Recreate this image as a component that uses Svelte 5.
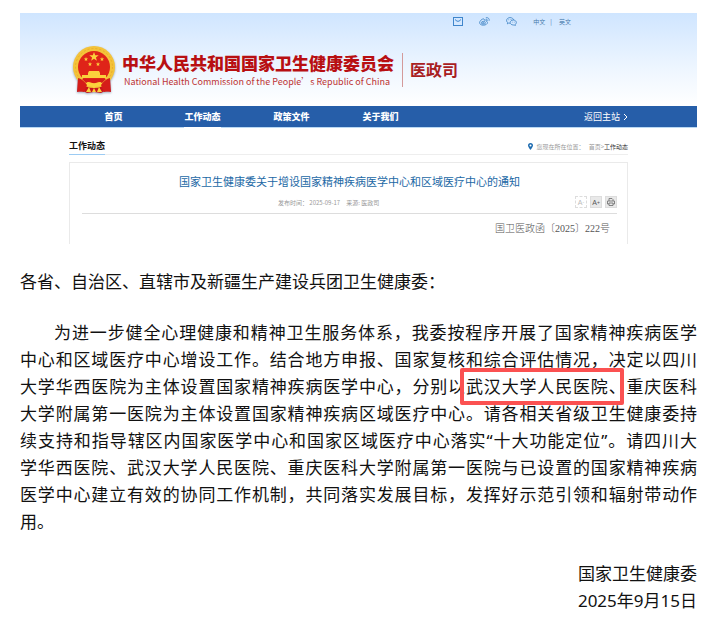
<script>
  const navItems = ['首页', '工作动态', '政策文件', '关于我们'];
  let current = '工作动态';

  // Рядки основного тексту; mark - виділена частина рядка
  const lines = [
    { text: '为进一步健全心理健康和精神卫生服务体系，我委按程序开展了国家精神疾病医学' },
    { text: '中心和区域医疗中心增设工作。结合地方申报、国家复核和综合评估情况，决定以四川' },
    { text: '大学华西医院为主体设置国家精神疾病医学中心，分别以', mark: '武汉大学人民医院、', rest: '重庆医科' },
    { text: '大学附属第一医院为主体设置国家精神疾病区域医疗中心。请各相关省级卫生健康委持' },
    { text: '续支持和指导辖区内国家医学中心和国家区域医疗中心落实“十大功能定位”。请四川大' },
    { text: '学华西医院、武汉大学人民医院、重庆医科大学附属第一医院与已设置的国家精神疾病' },
    { text: '医学中心建立有效的协同工作机制，共同落实发展目标，发挥好示范引领和辐射带动作' },
    { text: '用。' }
  ];

  function printPage() {
    window.print();
  }
</script>

<main lang="zh-CN">
  <section class="site">
    <header>
      <div class="tools">
        <a href="#mail" aria-label="邮箱">
          <svg width="10" height="9" viewBox="0 0 10 9" fill="none" stroke="#3f86cc">
            <rect x=".5" y=".5" width="9" height="8" />
            <path d="M2 2.5 4 4.2h2L8 2.5" />
          </svg>
        </a>
        <a href="#weibo" aria-label="微博">
          <svg width="11" height="9" viewBox="0 0 11 9" fill="none" stroke="#4a8bca" stroke-width=".9">
            <path d="M4.6 1.8C2.8 1.9.6 4 .6 5.8c0 1.5 1.8 2.4 3.7 2.4 2.4 0 4.2-1.3 4.2-2.7 0-.8-.7-1.2-1.4-1.4.4-1.2-.6-1.5-2-.9.2-.8.1-1.4-.5-1.4Z" />
            <ellipse cx="4.4" cy="5.8" rx="2" ry="1.4" />
            <circle cx="4.2" cy="5.9" r=".5" />
            <path d="M6.8.8c2-.8 4 .9 3.3 3M7 2.4c1-.3 1.7.4 1.4 1.3" />
          </svg>
        </a>
        <a href="#wechat" aria-label="微信">
          <svg width="11" height="9" viewBox="0 0 11 9" fill="none" stroke="#4a8bca" stroke-width=".9">
            <path d="M4 6.2 2.6 6.1 1.4 6.9l.2-1.3C-.6 3.6 1 .7 4 .6c2 0 3.4 1 3.6 2.4" />
            <path d="M7.2 3c-4 .3-4 4.7 0 5l1 0 1.2.5-.2-1C11.5 6 10.2 3.1 7.200 3Z" />
            <path d="M2.7 2.5v.7M5 2.3v.7M6.3 4.8v.6M8.3 4.8v.6" />
          </svg>
        </a>
        <span class="langs"><a href="#zh">中文</a><i>|</i><a href="#en">英文</a></span>
      </div>

      <div class="brand">
        <svg class="emblem" width="44" height="49" viewBox="0 0 44 49">
          <path d="M6 32 5 47l6-1 4 2 7-1 7 1 4-2 6 1-1-15Z" fill="#c9151b" />
          <circle cx="22" cy="22" r="21" fill="#f4c33a" />
          <circle cx="22" cy="22" r="18.5" fill="none" stroke="#e8ae2c" stroke-width="1" stroke-dasharray="2 2" />
          <circle cx="22" cy="22" r="16" fill="#df2419" />
          <path d="m22 7 1.200 3.300h3.500l-2.800 2.100 1 3.400-2.900-2-2.900 2 1-3.400-2.800-2.100h3.500Z" fill="#fbd13c" />
          <g fill="#fbd13c">
            <path d="m14 12 .6 1.400 1.500.1-1.200 1 .4 1.500-1.300-.8-1.300.8.4-1.500-1.200-1 1.500-.1Z" />
            <path d="m30 12 .6 1.400 1.500.1-1.200 1 .4 1.500-1.300-.8-1.300.8.4-1.500-1.200-1 1.500-.1Z" />
            <path d="m18 17 .6 1.400 1.500.1-1.200 1 .4 1.500-1.300-.8-1.300.8.4-1.500-1.200-1 1.500-.1Z" />
            <path d="m26 17 .6 1.400 1.500.1-1.200 1 .4 1.500-1.300-.8-1.300.8.4-1.500-1.200-1 1.500-.1Z" />
            <path d="M17 26h10l1 2v2h6v3H10v-3h6v-2Z" />
          </g>
          <path d="M10 34h24l-4 4-4-2-4 3-4-3-4 2Z" fill="#d51c19" />
          <path d="M13 39c4-4 6 0 9-1 3 1 5-3 9 1-2 3-5 1-9 4-4-3-7-1-9-4Z" fill="#fbd13c" />
          <path d="M6 33c4 1 7 4 9 7l-3 7-6-1ZM38 33c-4 1-7 4-9 7l3 7 6-1Z" fill="#d51c19" />
          <path d="m14 47 3-5 2 5ZM30 47l-3-5-2 5ZM20 47l2-4 2 4Z" fill="#fbd13c" />
        </svg>
        <div class="names">
          <strong>中华人民共和国国家卫生健康委员会</strong>
          <span>National Health Commission of the People’s Republic of China</span>
        </div>
        <b class="dept">医政司</b>
      </div>
    </header>

    <nav>
      <ul>
        {#each navItems as item}
          <li><a href="#nav" class:active={item === current}>{item}</a></li>
        {/each}
      </ul>
      <a class="back" href="#home">
        返回主站
        <svg width="5" height="8" viewBox="0 0 5 8" fill="none" stroke="#fff"><path d="m1 1 3 3-3 3" /></svg>
      </a>
    </nav>

    <div class="content">
      <div class="crumbs">
        <h2>工作动态</h2>
        <p>
          <svg width="5" height="7" viewBox="0 0 5 7"><path fill="#1e6cb0" fill-rule="evenodd" d="M2.500 0A2.500 2.500 0 0 0 0 2.500C0 4 2.500 7 2.500 7S5 4 5 2.500A2.500 2.500 0 0 0 2.500 0Zm0 1.500a1 1 0 1 1 0 2 1 1 0 0 1 0-2Z" /></svg>
          <span>您现在所在位置：</span>
          <span><a href="#home">首页</a>&gt;<a class="here" href="#nav">工作动态</a></span>
        </p>
      </div>

      <div class="card">
        <h1>国家卫生健康委关于增设国家精神疾病医学中心和区域医疗中心的通知</h1>
        <div class="meta">
          <p><span>发布时间： 2025-09-17</span><span>来源: 医政司</span></p>
          <div class="buttons">
            <button class="off" aria-label="缩小字体">A<sup>-</sup></button>
            <button aria-label="放大字体">A<sup>+</sup></button>
            <button aria-label="打印" on:click={printPage}>
              <svg width="8" height="8" viewBox="0 0 8 8" fill="none" stroke="#777" stroke-width=".9">
                <path d="M2 3V.5h3L6 1.5V3M2 6H.5V3h7v3H6M2 5h4v2.5H2Z" />
              </svg>
            </button>
          </div>
        </div>
        <p class="number">国卫医政函〔2025〕222号</p>
      </div>
    </div>
  </section>

  <article>
    <p>各省、自治区、直辖市及新疆生产建设兵团卫生健康委：</p>
    <p class="letter">
      {#each lines as line}
        <span class="line">{line.text}{#if line.mark}<mark>{line.mark}</mark>{line.rest}{/if}</span>
      {/each}
    </p>
    <footer>
      <p>国家卫生健康委</p>
      <p>2025年9月15日</p>
    </footer>
  </article>
</main>

<style>
  :global(body) {
    background: #fff;
  }

  main {
    padding: 13px 10px 16px 20px;
    font-family: "Noto Sans", "Noto Sans CJK SC", sans-serif;
    color: #111;
  }

  h1, h2, p, ul {
    margin: 0;
    padding: 0;
    font-weight: normal;
  }

  a {
    color: inherit;
    text-decoration: none;
  }

  svg {
    display: block;
  }

  .site {
    font-family: "Noto Sans CJK SC", sans-serif;
  }

  header {
    height: 93px;
    background: linear-gradient(#cfe5ff, #eef6ff 60%, #fff);
  }

  .tools {
    display: flex;
    justify-content: flex-end;
    align-items: center;
    gap: 16px;
    height: 16px;
    padding-right: 126px;
    font-size: 6px;
    color: #4679ab;
  }

  .langs {
    display: flex;
    gap: 5px;
  }

  .langs i {
    font-style: normal;
    padding: 0 2px 0 0;
  }

  .brand {
    display: flex;
    align-items: center;
    padding: 16px 0 0 52px;
  }

  .emblem {
    filter: drop-shadow(0 1px 1px #9aa8b8);
  }

  .names {
    display: flex;
    flex-direction: column;
    padding: 4px 8px 0 6px;
  }

  .names strong {
    font-size: 17px;
    line-height: 20px;
    font-weight: 900;
    color: #b80f12;
  }

  .names span {
    padding-left: 2px;
    font-size: 9px;
    line-height: 18px;
    color: #bd3434;
  }

  .dept {
    padding: 0 0 2px 7px;
    border-left: 1px solid #d49a9a;
    font-size: 16px;
    line-height: 32px;
    color: #a8201f;
  }

  nav {
    display: flex;
    justify-content: space-between;
    align-items: center;
    height: 22px;
    padding: 0 69px 0 49px;
    background: #265ea9;
    border-bottom: 1px solid #b9d8f3;
    box-sizing: border-box;
    color: #fff;
    font-size: 9px;
    line-height: 21px;
  }

  ul {
    display: grid;
    grid-template-columns: repeat(4, 89px);
    list-style: none;
    text-align: center;
    font-weight: 900;
  }

  ul a {
    display: inline-block;
  }

  .active {
    box-shadow: 0 1px #fff;
  }

  .back {
    display: flex;
    align-items: center;
    gap: 3px;
  }

  .content {
    padding: 10px 69px 0 49px;
  }

  .crumbs {
    display: flex;
    justify-content: space-between;
    align-items: center;
    border-bottom: 1px solid #eee;
  }

  h2 {
    font-size: 9px;
    line-height: 16px;
    font-weight: bold;
    box-shadow: 0 1px #9ccbf3;
  }

  .crumbs p {
    display: flex;
    align-items: center;
    gap: 4px;
    font-size: 6px;
    color: #999;
  }

  .here {
    color: #333;
  }

  .card {
    margin-top: 7px;
    padding: 8px 10px 6px 12px;
    border: 1px solid #eaeaea;
    border-bottom: 0;
  }

  h1 {
    text-align: center;
    font-size: 11px;
    line-height: 20px;
    color: #2268a5;
  }

  .meta {
    display: flex;
    justify-content: space-between;
    align-items: center;
    height: 22px;
    padding-left: 196px;
    border-bottom: 1px solid #ddd;
    font-size: 6px;
    color: #999;
  }

  .meta p {
    display: flex;
    gap: 6px;
  }

  .buttons {
    display: flex;
    gap: 3px;
  }

  button {
    display: flex;
    align-items: center;
    justify-content: center;
    width: 12px;
    height: 12px;
    padding: 0;
    border: 1px solid #ddd;
    background: #e9e9e9;
    color: #555;
    font: 7px "Liberation Sans", sans-serif;
  }

  button sup {
    font-size: 5px;
    line-height: 5px;
  }

  .off {
    border-style: dashed;
    background: #fff;
    color: #bbb;
  }

  .number {
    padding: 6px 7px 0 0;
    text-align: right;
    font-family: "Liberation Serif", "Noto Sans CJK SC", serif;
    font-size: 10px;
    line-height: 18px;
    font-weight: 300;
    color: #555;
  }

  article {
    padding-top: 24px;
    font-size: 17px;
    line-height: 27px;
  }

  .letter {
    margin: 24px 0 25px;
  }

  .line {
    display: block;
    text-align: justify;
    text-align-last: justify;
  }

  .line:first-child {
    padding-left: 2em;
  }

  .line:last-child {
    text-align-last: left;
  }

  mark {
    position: relative;
    background: none;
    color: inherit;
  }

  mark::after {
    content: "";
    position: absolute;
    inset: -7px 3px -7px -6px;
    border: 4px solid #fb5151;
    border-radius: 2px;
  }

  footer {
    text-align: right;
  }
</style>
